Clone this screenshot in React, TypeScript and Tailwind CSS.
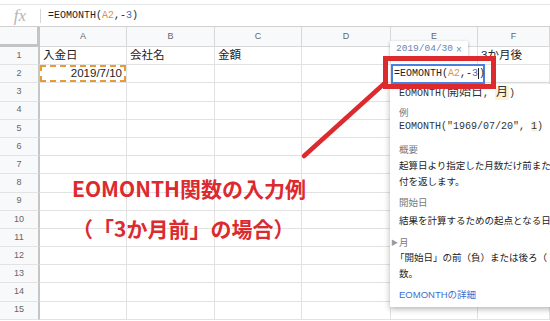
import React from "react";

const cols = [
  { w: 87, label: "A" },
  { w: 88, label: "B" },
  { w: 87, label: "C" },
  { w: 89, label: "D" },
  { w: 87, label: "E" },
  { w: 72, label: "F" },
];

const mono = { fontFamily: '"Liberation Mono", "DejaVu Sans Mono", monospace' };
const cjk = { fontFamily: '"Liberation Sans", "Noto Sans CJK JP", sans-serif' };

function Row({ n }: { n: number }) {
  const texts: Record<number, (string | null)[]> = {
    1: ["入金日", "会社名", "金額", null, null, "3か月後"],
  };
  const t = texts[n] || [];
  return (
    <div className="flex h-[18.2px] shrink-0">
      <div className="w-[40px] shrink-0 bg-[#f8f9fa] border-r-[2px] border-r-[#c6c6c6] border-b border-b-[#e3e3e3] flex items-center justify-center text-[9px] text-[#666]" style={cjk}>
        {n}
      </div>
      {cols.map((c, i) => (
        <div
          key={i}
          className={`shrink-0 border-r border-b border-[#e2e2e2] flex items-center text-[11.5px] text-[#222] overflow-hidden whitespace-nowrap ${i === 0 && n === 2 ? "relative" : ""}`}
          style={{ width: c.w, ...cjk }}
        >
          {t[i] && <span className="pl-[3px]">{t[i]}</span>}
          {i === 0 && n === 2 && (
            <div className="absolute inset-0 border-[2px] border-dashed border-[#e69b38] flex items-center justify-end pr-[2px]">
              <span className="text-[11.5px]">2019/7/10</span>
            </div>
          )}
        </div>
      ))}
    </div>
  );
}

export default function App() {
  const rows = Array.from({ length: 15 }, (_, i) => i + 1);
  return (
    <div className="relative w-[550px] h-[321px] bg-white overflow-hidden" style={cjk}>
      <div className="flex flex-col">
        <div className="h-[5px] border-b border-[#e6e6e6]" />
        <div className="h-[22px] flex items-center border-b border-[#d0d0d0]">
          <div className="w-[40px] h-full flex items-center justify-center">
            <span className="text-[17px] italic text-[#b5b5b5] leading-none" style={{ fontFamily: '"Liberation Serif", serif' }}>
              fx
            </span>
          </div>
          <div className="w-px h-[14px] bg-[#d6d6d6]" />
          <div className="pl-[7px] text-[10px] text-[#222] leading-none" style={mono}>
            =EOMONTH(<span className="text-[#e69138]">A2</span>,-<span className="text-[#3d6bc4]">3</span>)
          </div>
        </div>
        <div className="flex h-[20px] bg-[#f8f9fa]">
          <div className="w-[40px] shrink-0 border-r-[3px] border-b-[3px] border-[#c4c4c4]" />
          {cols.map((c, i) => (
            <div
              key={i}
              className="shrink-0 border-r border-b border-[#d8d8d8] flex items-center justify-center text-[9px] text-[#666]"
              style={{ width: c.w }}
            >
              {c.label}
            </div>
          ))}
        </div>
        {rows.map((n) => (
          <Row key={n} n={n} />
        ))}
      </div>

      {/* arrow */}
      <svg className="absolute left-0 top-0" width="550" height="321">
        <line x1="304" y1="156" x2="386" y2="82" stroke="#dc2a2e" strokeWidth="4.5" strokeLinecap="round" />
      </svg>

      {/* annotation text */}
      <div className="absolute left-[72px] top-[174px] text-[21px] font-bold text-[#dc2a2e] leading-[28px] whitespace-nowrap [text-spacing-trim:space-all]" style={{ fontFamily: '"Noto Sans CJK JP", sans-serif' }}>
        EOMONTH関数の入力例
      </div>
      <div className="absolute left-[72px] top-[214px] text-[21px] font-bold text-[#dc2a2e] leading-[28px] whitespace-nowrap [text-spacing-trim:space-all]" style={{ fontFamily: '"Noto Sans CJK JP", sans-serif' }}>
        （「3か月前」の場合）
      </div>

      {/* help panel */}
      <div className="absolute left-[390px] top-[84px] w-[175px] h-[223px] bg-white shadow-[0_2px_6px_rgba(0,0,0,0.3)] pl-[9px] pt-[2px] whitespace-nowrap overflow-hidden [text-spacing-trim:space-all]">
        <div className="h-[14px] leading-[14px] text-[10px] text-[#333]" style={{ fontFamily: '"Liberation Mono", "Noto Sans CJK JP", monospace' }}>
          EOMONTH(<span className="text-[12px]">開始日</span>, <span className="bg-[#fdf1d6] px-[1px] text-[12px]">月</span>)
        </div>
        <div className="mt-[6px] h-[14px] leading-[14px] text-[9.5px] text-[#777]">例</div>
        <div className="h-[14px] leading-[14px] text-[10px] text-[#333]" style={mono}>
          EOMONTH("1969/07/20", <span className="bg-[#fdf1d6] rounded-[2px]">1</span>)
        </div>
        <div className="mt-[9px] h-[14px] leading-[14px] text-[9.5px] text-[#777]">概要</div>
        <div className="mt-[1px] leading-[16px] text-[9.5px] text-[#222]">起算日より指定した月数だけ前また</div>
        <div className="leading-[16px] text-[9.5px] text-[#222]">付を返します。</div>
        <div className="mt-[6px] h-[14px] leading-[14px] text-[9.5px] text-[#777]">開始日</div>
        <div className="mt-[3px] leading-[16px] text-[9.5px] text-[#222]">結果を計算するための起点となる日</div>
        <div className="mt-[7px] h-[14px] leading-[14px] text-[9.5px] text-[#777] relative">
          <span className="absolute left-[-8px] top-0 text-[7px] text-[#999]">▶</span>月
        </div>
        <div className="leading-[16px] text-[9.5px] text-[#222] ml-[-4px]">「開始日」の前（負）または後ろ（</div>
        <div className="leading-[16px] text-[9.5px] text-[#222]">数。</div>
        <div className="mt-[6px] h-[14px] leading-[14px] text-[9.5px] text-[#3b6fd0]">EOMONTHの詳細</div>
      </div>

      {/* date chip */}
      <div className="absolute left-[390px] top-[41px] w-[78px] h-[17px] bg-white shadow-[0_1px_3px_rgba(0,0,0,0.3)] flex items-center pl-[6px] gap-[3px]">
        <span className="text-[9.5px] text-[#6683b8]" style={mono}>2019/04/30</span>
        <span className="text-[10px] text-[#888] leading-none">×</span>
      </div>

      {/* editor */}
      <div className="absolute left-[391px] top-[64px] w-[94px] h-[20px] bg-white border-[2px] border-[#4a7fe0] flex items-center pl-[1px]">
        <span className="text-[10px] text-[#222] leading-none whitespace-nowrap" style={mono}>
          =EOMONTH(<span className="text-[#e69138]">A2</span>,-<span className="text-[#3d6bc4]">3</span>
          <span className="inline-block w-px h-[11px] bg-[#222] align-middle" />)
        </span>
      </div>

      {/* red box */}
      <div className="absolute left-[383px] top-[56px] w-[113px] h-[33px] border-[5px] border-[#dc2a2e]" />
    </div>
  );
}
